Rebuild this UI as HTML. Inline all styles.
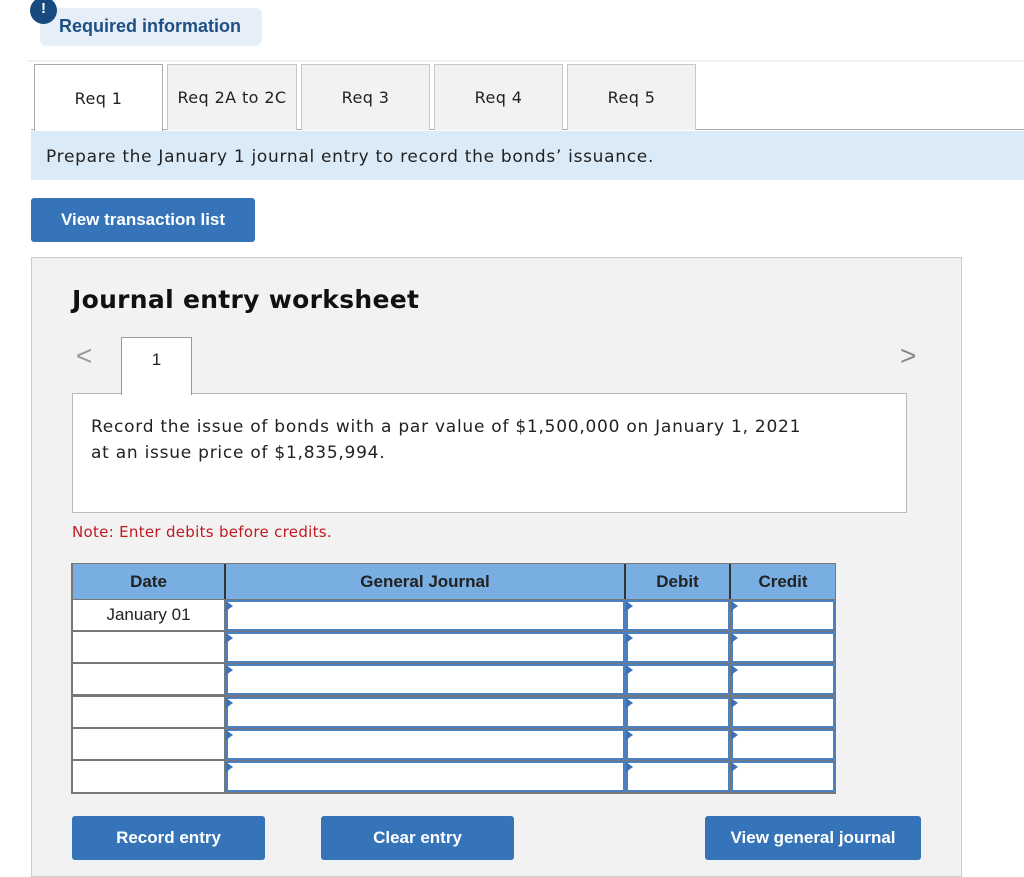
<!DOCTYPE html>
<html><head><meta charset="utf-8"><style>
*{box-sizing:border-box;margin:0;padding:0}
body{width:1024px;height:872px;background:#fff;position:relative;overflow:hidden;font-family:"DejaVu Sans","Liberation Sans",sans-serif;color:#222}
.a{position:absolute}
.tab{position:absolute;top:64px;height:66px;background:#f2f2f2;border:1px solid #c8c8c8;border-bottom:none;font-size:16px;letter-spacing:0.4px;display:flex;align-items:center;justify-content:center;color:#222}
.btn{position:absolute;background:#3574b8;color:#fff;border-radius:3px;font-family:"Liberation Sans",sans-serif;font-weight:bold;font-size:17px;display:flex;align-items:center;justify-content:center}
.cell{position:absolute;background:#fff}
.inp{position:absolute;background:#fff;border:2px solid #4d80c0}
.tri{position:absolute;width:0;height:0;border-top:5px solid transparent;border-bottom:5px solid transparent;border-left:7px solid #3a72b8}
.hd{position:absolute;top:564px;height:35px;background:#78aee2;font-family:"Liberation Sans",sans-serif;font-weight:bold;font-size:17px;color:#222;display:flex;align-items:center;justify-content:center;border-right:2px solid #333}
</style></head><body>
<div class="a" style="left:40px;top:8px;width:222px;height:38px;background:#e6eff8;border-radius:7px"></div>
<div class="a" style="left:30px;top:-3px;width:27px;height:27px;background:#174a7e;border-radius:50%;color:#fff;font-weight:bold;font-family:'Liberation Sans',sans-serif;font-size:15px;text-align:center;line-height:24px">!</div>
<div class="a" style="left:59px;top:16px;font-family:'Liberation Sans',sans-serif;font-weight:bold;font-size:18px;color:#1e4f85">Required information</div>
<div class="a" style="left:27px;top:60px;width:997px;height:2px;background:#f0f0f0"></div>

<div class="a" style="left:31px;top:129px;width:993px;height:1px;background:#aaa"></div>
<div class="tab" style="left:34px;width:129px;background:#fff;border-color:#aaa;height:67px">Req 1</div>
<div class="tab" style="left:167px;width:130px">Req 2A to 2C</div>
<div class="tab" style="left:301px;width:129px">Req 3</div>
<div class="tab" style="left:434px;width:129px">Req 4</div>
<div class="tab" style="left:567px;width:129px">Req 5</div>

<div class="a" style="left:31px;top:131px;width:993px;height:49px;background:#dbeaf7"></div>
<div class="a" style="left:46px;top:147px;font-size:17px;letter-spacing:0.7px;color:#222">Prepare the January 1 journal entry to record the bonds’ issuance.</div>

<div class="btn" style="left:31px;top:198px;width:224px;height:44px">View transaction list</div>

<div class="a" style="left:31px;top:257px;width:931px;height:620px;background:#f2f2f2;border:1px solid #ccc"></div>
<div class="a" style="left:72px;top:285px;font-size:25px;letter-spacing:0.3px;font-weight:bold;color:#111">Journal entry worksheet</div>
<div class="a" style="left:76px;top:340px;font-size:28px;color:#999;font-family:'Liberation Sans',sans-serif">&lt;</div>
<div class="a" style="left:900px;top:340px;font-size:28px;color:#888;font-family:'Liberation Sans',sans-serif">&gt;</div>
<div class="a" style="left:72px;top:393px;width:835px;height:120px;background:#fff;border:1px solid #bbb"></div>
<div class="a" style="left:121px;top:337px;width:71px;height:58px;background:#fff;border:1px solid #999;border-bottom:none;font-family:'Liberation Sans',sans-serif;font-size:17px;text-align:center;padding-top:12px">1</div>
<div class="a" style="left:91px;top:414px;font-size:17px;letter-spacing:0.75px;line-height:26px;color:#222">Record the issue of bonds with a par value of $1,500,000 on January 1, 2021<br>at an issue price of $1,835,994.</div>
<div class="a" style="left:72px;top:523px;font-size:15px;letter-spacing:0.3px;color:#c0191f">Note: Enter debits before credits.</div>

<div class="a" style="left:71px;top:563px;width:765px;height:231px;background:#777"></div>
<div class="hd" style="left:73px;width:153px">Date</div>
<div class="hd" style="left:226px;width:400px">General Journal</div>
<div class="hd" style="left:626px;width:105px">Debit</div>
<div class="hd" style="left:731px;width:104px;border-right:none">Credit</div>

<div class="cell" style="left:73px;top:600px;width:151px;height:30px;font-family:'Liberation Sans',sans-serif;font-size:17px;text-align:center;line-height:30px">January 01</div>
<div class="cell" style="left:73px;top:632px;width:151px;height:30px"></div>
<div class="cell" style="left:73px;top:664px;width:151px;height:30px"></div>
<div class="cell" style="left:73px;top:697px;width:151px;height:30px"></div>
<div class="cell" style="left:73px;top:729px;width:151px;height:30px"></div>
<div class="cell" style="left:73px;top:761px;width:151px;height:31px"></div>

<div class="inp" style="left:226px;top:600px;width:399px;height:31px"></div><div class="inp" style="left:626px;top:600px;width:104px;height:31px"></div><div class="inp" style="left:731px;top:600px;width:104px;height:31px"></div>
<div class="inp" style="left:226px;top:632px;width:399px;height:31px"></div><div class="inp" style="left:626px;top:632px;width:104px;height:31px"></div><div class="inp" style="left:731px;top:632px;width:104px;height:31px"></div>
<div class="inp" style="left:226px;top:664px;width:399px;height:31px"></div><div class="inp" style="left:626px;top:664px;width:104px;height:31px"></div><div class="inp" style="left:731px;top:664px;width:104px;height:31px"></div>
<div class="inp" style="left:226px;top:697px;width:399px;height:31px"></div><div class="inp" style="left:626px;top:697px;width:104px;height:31px"></div><div class="inp" style="left:731px;top:697px;width:104px;height:31px"></div>
<div class="inp" style="left:226px;top:729px;width:399px;height:31px"></div><div class="inp" style="left:626px;top:729px;width:104px;height:31px"></div><div class="inp" style="left:731px;top:729px;width:104px;height:31px"></div>
<div class="inp" style="left:226px;top:761px;width:399px;height:31px"></div><div class="inp" style="left:626px;top:761px;width:104px;height:31px"></div><div class="inp" style="left:731px;top:761px;width:104px;height:31px"></div>

<div class="tri" style="left:226px;top:601px"></div><div class="tri" style="left:626px;top:601px"></div><div class="tri" style="left:731px;top:601px"></div>
<div class="tri" style="left:226px;top:633px"></div><div class="tri" style="left:626px;top:633px"></div><div class="tri" style="left:731px;top:633px"></div>
<div class="tri" style="left:226px;top:665px"></div><div class="tri" style="left:626px;top:665px"></div><div class="tri" style="left:731px;top:665px"></div>
<div class="tri" style="left:226px;top:698px"></div><div class="tri" style="left:626px;top:698px"></div><div class="tri" style="left:731px;top:698px"></div>
<div class="tri" style="left:226px;top:730px"></div><div class="tri" style="left:626px;top:730px"></div><div class="tri" style="left:731px;top:730px"></div>
<div class="tri" style="left:226px;top:762px"></div><div class="tri" style="left:626px;top:762px"></div><div class="tri" style="left:731px;top:762px"></div>

<div class="btn" style="left:72px;top:816px;width:193px;height:44px">Record entry</div>
<div class="btn" style="left:321px;top:816px;width:193px;height:44px">Clear entry</div>
<div class="btn" style="left:705px;top:816px;width:216px;height:44px">View general journal</div>
</body></html>
